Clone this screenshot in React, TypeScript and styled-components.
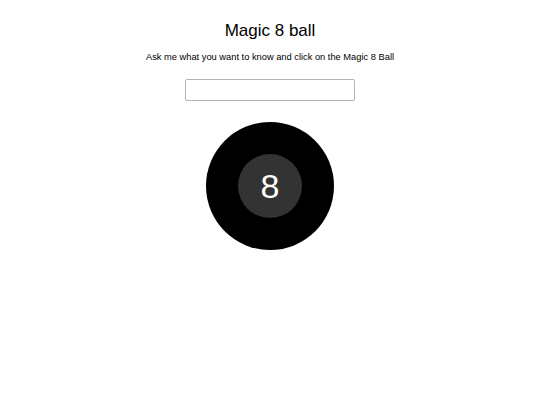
import styled, { createGlobalStyle } from 'styled-components'

const GlobalStyle = createGlobalStyle`
  body {
    margin: 0;
    background: #fff;
    font-family: "Liberation Sans", Arial, sans-serif;
    color: #000;
  }
`

const StyledPage = styled.main`
  display: flex;
  flex-direction: column;
  align-items: center;
  padding-top: 20px;
`

const StyledTitle = styled.h1`
  font-size: 17px;
  font-weight: normal;
  line-height: 22px;
  margin: 0;
`

const StyledPrompt = styled.p`
  font-size: 9.3px;
  line-height: 12px;
  margin: 9px 0 0;
`

const StyledInput = styled.input`
  box-sizing: border-box;
  width: 170px;
  height: 22px;
  margin-top: 16px;
  border: 1px solid #b4b4b4;
  border-radius: 2px;
  outline: none;
`

const StyledBall = styled.div`
  display: flex;
  align-items: center;
  justify-content: center;
  width: 128px;
  height: 128px;
  margin-top: 21px;
  border-radius: 50%;
  background: #000;
  cursor: pointer;
`

const StyledWindow = styled.div`
  display: flex;
  align-items: center;
  justify-content: center;
  width: 64px;
  height: 64px;
  border-radius: 50%;
  background: #333;
  color: #fff;
  font-size: 34px;
`

const App: React.FC = () => {
  return (
    <>
      <GlobalStyle />
      <StyledPage>
        <StyledTitle>Magic 8 ball</StyledTitle>
        <StyledPrompt>Ask me what you want to know and click on the Magic 8 Ball</StyledPrompt>
        <StyledInput type="text" />
        <StyledBall>
          <StyledWindow>8</StyledWindow>
        </StyledBall>
      </StyledPage>
    </>
  )
}

export default App
